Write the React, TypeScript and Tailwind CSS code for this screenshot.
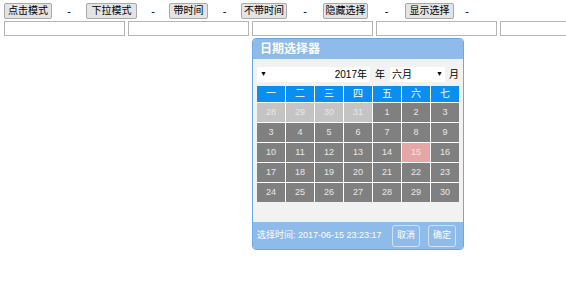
import React from "react";

const buttons = [
  { t: "点击模式", w: "w-[48px]", g: "w-[34px]" },
  { t: "下拉模式", w: "w-[51px]", g: "w-[32px]" },
  { t: "带时间", w: "w-[39px]", g: "w-[33px]" },
  { t: "不带时间", w: "w-[46px]", g: "w-[36px]" },
  { t: "隐藏选择", w: "w-[45px]", g: "w-[37px]" },
  { t: "显示选择", w: "w-[49px]", g: "w-[26px]" },
];
const weekdays = ["一", "二", "三", "四", "五", "六", "七"];

type Day = { n: number; prev?: boolean; sel?: boolean };

// the reference repeats "3" at the start of the second week
const nums = [1, 2, 3, ...Array.from({ length: 28 }, (_, i) => i + 3)];
const days: Day[] = [
  ...[28, 29, 30, 31].map((n) => ({ n, prev: true })),
  ...nums.map((n) => ({ n, sel: n === 15 })),
];

export default function App() {
  return (
    <div
      className="w-[566px] h-[295px] bg-white text-black text-[11px] overflow-hidden"
      style={{ fontFamily: '"Liberation Sans", "Noto Sans CJK SC", sans-serif' }}
    >
      <div className="flex items-center pl-1 pt-[3px] h-[19px]">
        {buttons.map((b) => (
          <React.Fragment key={b.t}>
            <button
              className={
                b.w +
                " h-[16px] leading-none bg-[#e4e4e4] border border-[#a9a9a9] rounded-[2px] text-[10px] whitespace-nowrap"
              }
            >
              {b.t}
            </button>
            <span className={b.g + " text-center"}>-</span>
          </React.Fragment>
        ))}
      </div>
      <div className="flex gap-[3px] pl-1 mt-[2px]">
        {[0, 1, 2, 3, 4].map((i) => (
          <input
            key={i}
            className="w-[121px] h-[15px] shrink-0 border border-[#b5b5b5] bg-white"
          />
        ))}
      </div>
      <div className="ml-[252px] mt-[2px] w-[212px] h-[212px] border border-[#6aa9e8] rounded-[4px] bg-[#f2f2f2] flex flex-col overflow-hidden">
        <div className="h-[20px] bg-[#8ebbe9] text-white font-bold text-[12px] leading-[20px] pl-[7px]">
          日期选择器
        </div>
        <div className="flex items-center px-[4px] mt-[7px] h-[16px] text-[10px]">
          <div className="w-[113px] h-[15px] bg-white flex items-center justify-between px-[3px]">
            <span className="text-[7px]">▼</span>
            <span>2017年</span>
          </div>
          <span className="ml-[5px]">年</span>
          <div className="ml-[5px] w-[55px] h-[15px] bg-white flex items-center justify-between px-[2px]">
            <span>六月</span>
            <span className="text-[7px]">▼</span>
          </div>
          <span className="ml-[4px]">月</span>
        </div>
        <div className="mx-[4px] mt-[4px] grid grid-cols-7 gap-px bg-white w-[202px]">
          {weekdays.map((w) => (
            <div key={w} className="h-[16px] bg-[#0a8ef0] text-white text-center leading-[16px] text-[10px]">
              {w}
            </div>
          ))}
          {days.map((d, i) => (
            <div
              key={i}
              className={
                "h-[19px] text-center leading-[19px] text-[9px] " +
                (d.prev
                  ? "bg-[#c4c4c4] text-[#e8e8e8]"
                  : d.sel
                  ? "bg-[#e5a6a6] text-[#f4e4e4]"
                  : "bg-[#808080] text-[#e8e8e8]")
              }
            >
              {d.n}
            </div>
          ))}
        </div>
        <div className="flex-1" />
        <div className="h-[27px] bg-[#8ebbe9] flex items-center pl-[4px] pr-[7px] text-white text-[9px]">
          <span>选择时间: 2017-06-15 23:23:17</span>
          <div className="ml-auto flex gap-[8px]">
            <button className="w-[28px] h-[22px] border border-[#cfe2f6] rounded-[3px] text-[9px]">取消</button>
            <button className="w-[28px] h-[22px] border border-[#cfe2f6] rounded-[3px] text-[9px]">确定</button>
          </div>
        </div>
      </div>
    </div>
  );
}
